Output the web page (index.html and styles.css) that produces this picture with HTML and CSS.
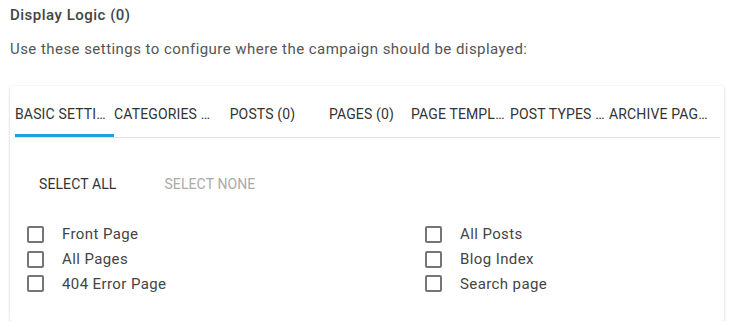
FILE: index.html
```html
<!DOCTYPE html>
<html lang="en">
<head>
  <meta charset="UTF-8" />
  <title>Display Logic</title>
  <link rel="stylesheet" href="styles.css">
</head>
<body>
  <div class="wrap">
    <h3 class="title">Display Logic (0)</h3>
    <p class="intro">Use these settings to configure where the campaign should be displayed:</p>

    <div class="card">
      <div class="tabs">
        <div class="tab active"><span>Basic Settings</span></div>
        <div class="tab"><span>Categories (0)</span></div>
        <div class="tab"><span>Posts (0)</span></div>
        <div class="tab"><span>Pages (0)</span></div>
        <div class="tab"><span>Page Templates (0)</span></div>
        <div class="tab"><span>Post Types (0)</span></div>
        <div class="tab"><span>Archive Pages (0)</span></div>
      </div>

      <div class="panel">
        <div class="actions">
          <button class="btn">Select All</button>
          <button class="btn disabled">Select None</button>
        </div>

        <div class="options">
          <label class="opt"><span class="box"></span>Front Page</label>
          <label class="opt"><span class="box"></span>All Posts</label>
          <label class="opt"><span class="box"></span>All Pages</label>
          <label class="opt"><span class="box"></span>Blog Index</label>
          <label class="opt"><span class="box"></span>404 Error Page</label>
          <label class="opt"><span class="box"></span>Search page</label>
        </div>
      </div>
    </div>
  </div>
</body>
</html>
```

FILE: styles.css
```css
* {
  margin: 0;
  padding: 0;
  box-sizing: border-box;
}

body {
  font-family: Roboto, "Liberation Sans", sans-serif;
  background: #fff;
  color: #333;
}

.wrap {
  padding: 5px 5px 0 10px;
}

.title {
  font-size: 15px;
  font-weight: 500;
  line-height: 20px;
  letter-spacing: 0.5px;
  color: #444;
}

.intro {
  font-size: 15px;
  line-height: 20px;
  letter-spacing: 0.45px;
  color: #555;
  margin-top: 14px;
}

.card {
  margin-top: 27px;
  width: 714px;
  height: 235px;
  background: #fff;
  border-radius: 2px;
  box-shadow: 0 1px 3px rgba(0, 0, 0, 0.18), 0 0 1px rgba(0, 0, 0, 0.08);
  padding: 0 4px 0 5px;
}

.tabs {
  display: flex;
  height: 52px;
  border-bottom: 1px solid #e2e2e2;
  padding-top: 8px;
}

.tab {
  width: 99px;
  flex: none;
  display: flex;
  align-items: center;
  justify-content: center;
  font-size: 14px;
  letter-spacing: 0.15px;
  text-transform: uppercase;
  color: #333;
  border-bottom: 3px solid transparent;
  overflow: hidden;
}

.tab span {
  display: block;
  max-width: 99px;
  white-space: nowrap;
  overflow: hidden;
  text-overflow: ellipsis;
}

.tab.active {
  border-bottom-color: #1fa0e2;
}

.panel {
  padding-top: 28px;
}

.actions {
  display: flex;
}

.btn {
  font-family: inherit;
  font-size: 14px;
  font-weight: 400;
  letter-spacing: 0.1px;
  text-transform: uppercase;
  background: none;
  border: none;
  color: #333;
  padding: 0 24px;
  height: 36px;
  line-height: 36px;
}

.btn.disabled {
  color: #aaa;
}

.options {
  display: grid;
  grid-template-columns: 398px auto;
  padding: 20px 0 0 12px;
}

.opt {
  display: flex;
  align-items: center;
  height: 24.7px;
  font-size: 15px;
  letter-spacing: 0.4px;
  color: #444;
}

.box {
  width: 17px;
  height: 17px;
  border: 2px solid #757575;
  border-radius: 2px;
  margin-right: 18px;
}
```
